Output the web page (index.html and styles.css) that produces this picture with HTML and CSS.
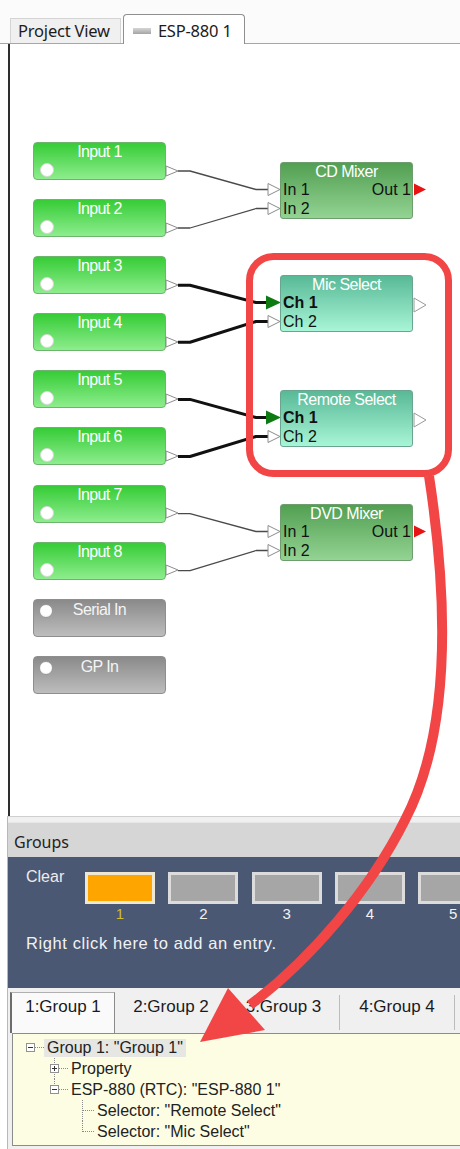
FILE: index.html
```
<!DOCTYPE html>
<html lang="en">
<head>
    <meta charset="UTF-8">
    <meta name="viewport" content="width=device-width, initial-scale=1.0">
    <title>ESP-880 1</title>
    <link rel="stylesheet" href="styles.css">
</head>
<body>

<div class="app">

    <div class="doc-tabs">
        <div class="doc-tab">Project View</div>
        <div class="doc-tab active"><span class="doc-icon"></span>ESP-880 1</div>
    </div>

    <div class="canvas">
        <!-- wires + ports, drawn in page coordinates -->
        <svg class="wires" width="450" height="772" viewBox="10 44 450 772">
            <g fill="none" stroke="#4a4a4a" stroke-width="1.3" stroke-linejoin="round">
                <path d="M178 171 L190 171 L256 189.5 L268 189.5"/>
                <path d="M178 228 L190 228 L256 208.5 L268 208.5"/>
                <path d="M178 513.6 L190 513.6 L256 531.5 L268 531.5"/>
                <path d="M178 570.7 L190 570.7 L256 550.5 L268 550.5"/>
            </g>
            <g fill="none" stroke="#111" stroke-width="3" stroke-linejoin="round">
                <path d="M178 285.2 L190 285.2 L256 302.5 L268 302.5"/>
                <path d="M178 342.3 L190 342.3 L256 321.5 L268 321.5"/>
                <path d="M178 399.4 L190 399.4 L256 417.5 L268 417.5"/>
                <path d="M178 456.5 L190 456.5 L256 436.5 L268 436.5"/>
            </g>

            <!-- input outputs -->
            <g fill="#fff" stroke="#8c8c8c" stroke-width="1">
                <polygon points="166,166 178,171 166,176"/>
                <polygon points="166,223 178,228 166,233"/>
                <polygon points="166,280 178,285 166,290"/>
                <polygon points="166,337 178,342 166,347"/>
                <polygon points="166,394 178,399 166,404"/>
                <polygon points="166,451 178,456 166,461"/>
                <polygon points="166,508 178,513 166,518"/>
                <polygon points="166,565 178,570 166,575"/>
            </g>

            <!-- block inputs -->
            <g fill="#fff" stroke="#8c8c8c" stroke-width="1">
                <polygon points="268,183.5 280,189.5 268,195.5"/>
                <polygon points="268,202.5 280,208.5 268,214.5"/>
                <polygon points="268,315.5 280,321.5 268,327.5"/>
                <polygon points="268,430.5 280,436.5 268,442.5"/>
                <polygon points="268,525.5 280,531.5 268,537.5"/>
                <polygon points="268,544.5 280,550.5 268,556.5"/>
            </g>
            <g fill="#0e7a12">
                <polygon points="266,295.5 281,302.5 266,309.5"/>
                <polygon points="266,410.5 281,417.5 266,424.5"/>
            </g>

            <!-- block outputs -->
            <g fill="#e81414">
                <polygon points="414,183.5 426,189.5 414,195.5"/>
                <polygon points="414,525.5 426,531.5 414,537.5"/>
            </g>
            <g fill="#fff" stroke="#9a9a9a" stroke-width="1">
                <polygon points="414,298 426,305 414,312"/>
                <polygon points="414,413 426,420 414,427"/>
            </g>
        </svg>

        <div class="inputs">
            <div class="src"><span class="src-name">Input 1</span><span class="led"></span></div>
            <div class="src"><span class="src-name">Input 2</span><span class="led"></span></div>
            <div class="src"><span class="src-name">Input 3</span><span class="led"></span></div>
            <div class="src"><span class="src-name">Input 4</span><span class="led"></span></div>
            <div class="src"><span class="src-name">Input 5</span><span class="led"></span></div>
            <div class="src"><span class="src-name">Input 6</span><span class="led"></span></div>
            <div class="src"><span class="src-name">Input 7</span><span class="led"></span></div>
            <div class="src"><span class="src-name">Input 8</span><span class="led"></span></div>
            <div class="src off"><span class="src-name">Serial In</span><span class="led"></span></div>
            <div class="src off"><span class="src-name">GP In</span><span class="led"></span></div>
        </div>

        <div class="block mixer cd">
            <div class="block-title">CD Mixer</div>
            <div class="port-row"><span>In 1</span><span>Out 1</span></div>
            <div class="port-row"><span>In 2</span></div>
        </div>

        <div class="block selector mic">
            <div class="block-title">Mic Select</div>
            <div class="port-row"><b>Ch 1</b></div>
            <div class="port-row"><span>Ch 2</span></div>
        </div>

        <div class="block selector remote">
            <div class="block-title">Remote Select</div>
            <div class="port-row"><b>Ch 1</b></div>
            <div class="port-row"><span>Ch 2</span></div>
        </div>

        <div class="block mixer dvd">
            <div class="block-title">DVD Mixer</div>
            <div class="port-row"><span>In 1</span><span>Out 1</span></div>
            <div class="port-row"><span>In 2</span></div>
        </div>
    </div>

    <div class="groups">
        <div class="groups-head">Groups</div>

        <div class="board">
            <div class="slots">
                <span class="clear">Clear</span>
                <div class="slot on"><span class="slot-box"></span><span class="slot-no">1</span></div>
                <div class="slot"><span class="slot-box"></span><span class="slot-no">2</span></div>
                <div class="slot"><span class="slot-box"></span><span class="slot-no">3</span></div>
                <div class="slot"><span class="slot-box"></span><span class="slot-no">4</span></div>
                <div class="slot"><span class="slot-box"></span><span class="slot-no">5</span></div>
            </div>
            <p class="hint">Right click here to add an entry.</p>
        </div>

        <div class="group-tabs">
            <span class="gtab active">1:Group 1</span>
            <span class="gtab w2">2:Group 2</span>
            <span class="gtab w3">3:Group 3</span>
            <span class="gtab w4">4:Group 4</span>
        </div>

        <div class="tree">
            <div class="row root">
                <span class="tog"></span><span class="twig"></span><span class="label sel">Group 1: "Group 1"</span>
            </div>
            <div class="row lv1 rail-mid">
                <span class="tog plus"></span><span class="twig"></span><span class="label">Property</span>
            </div>
            <div class="row lv1 rail-end">
                <span class="tog"></span><span class="twig"></span><span class="label">ESP-880 (RTC): "ESP-880 1"</span>
            </div>
            <div class="row lv2 rail-mid">
                <span class="twig long"></span><span class="label">Selector: "Remote Select"</span>
            </div>
            <div class="row lv2 rail-end">
                <span class="twig long"></span><span class="label">Selector: "Mic Select"</span>
            </div>
        </div>
    </div>

    <!-- red annotation drawn over the screenshot -->
    <svg class="callout" width="460" height="1149" viewBox="0 0 460 1149">
        <rect x="249.5" y="256.5" width="199" height="217" rx="24" fill="none" stroke="#f24646" stroke-width="7"/>
        <path d="M429 476 C448 600 452 730 405 820 C370 890 310 960 250 1005" fill="none" stroke="#f24646" stroke-width="10"/>
        <polygon points="200,1042 228,988 265,1030" fill="#f24646"/>
    </svg>

</div>

</body>
</html>
```

FILE: styles.css
```
body {
    margin: 0;
    font-family: "Liberation Sans", Arial, sans-serif;
    background: #fff;
}

.app {
    position: relative;
    width: 460px;
    height: 1149px;
    overflow: hidden;
}

/* document tabs */
.doc-tabs {
    height: 43px;
    border-bottom: 1px solid #a6a6a6;
    display: flex;
    align-items: flex-end;
    padding-left: 10px;
    background: #fbfbfb;
}

.doc-tab {
    height: 24px;
    line-height: 24px;
    padding: 0 10px 0 7px;
    background: #f0f0f0;
    border: 1px solid #d4d4d4;
    border-bottom: none;
    font-family: "Noto Sans", sans-serif;
    font-size: 16.5px;
    letter-spacing: -0.2px;
    color: #1c1c1c;
}

.doc-tab.active {
    margin: 0 0 -1px 2px;
    padding: 3px 12px 0 9px;
    box-sizing: border-box;
    height: 30px;
    display: flex;
    align-items: center;
    background: #fff;
    border-color: #8f8f8f;
    border-radius: 4px 4px 0 0;
}

.doc-icon {
    width: 18px;
    height: 6px;
    margin-right: 7px;
    background: linear-gradient(#d6d6d6, #a4a4a4);
}

/* design canvas */
.canvas {
    position: relative;
    margin-left: 8px;
    height: 772px;
    border-left: 2px solid #2e2e2e;
    background: #fff;
}

.wires {
    position: absolute;
    left: 0;
    top: 0;
}

.inputs {
    display: flex;
    flex-direction: column;
    gap: 19.1px;
    padding: 98px 0 0 23px;
}

.src {
    display: grid;
    width: 133px;
    height: 38px;
    box-sizing: border-box;
    border: 1px solid #6db46d;
    border-radius: 4px;
    background: linear-gradient(#36cc36, #8ded8d);
}

.src > * {
    grid-area: 1 / 1;
}

.src-name {
    justify-self: center;
    align-self: start;
    line-height: 18px;
    font-size: 16px;
    letter-spacing: -0.6px;
    color: #fff;
}

.led {
    justify-self: start;
    align-self: end;
    width: 14px;
    height: 14px;
    margin: 0 0 2px 6px;
    box-sizing: border-box;
    border-radius: 50%;
    border: 1px solid #d8d8d8;
    background: #fff;
}

.src.off {
    border-color: #8e8e8e;
    background: linear-gradient(#8a8a8a, #bdbdbd);
}

.src.off .led {
    align-self: start;
    margin: 4px 0 0 5px;
    border-color: #9a9a9a;
    background: radial-gradient(circle at 50% 40%, #fff 55%, #e4e4e4);
}

.src.off .src-name {
    line-height: 20px;
    color: #f4f4f4;
}

/* processing blocks */
.block {
    position: absolute;
    left: 270px;
    width: 133px;
    height: 57px;
    box-sizing: border-box;
    border: 1px solid #6e9e6e;
    border-radius: 3px;
}

.block-title {
    line-height: 17px;
    text-align: center;
    font-size: 16px;
    letter-spacing: -0.5px;
    color: #fff;
}

.port-row {
    display: flex;
    justify-content: space-between;
    padding: 0 1px 0 2px;
    line-height: 19px;
    font-size: 16px;
    color: #111;
}

.mixer {
    background: linear-gradient(#529f52, #93d393);
}

.selector {
    border-color: #6aa590;
    background: linear-gradient(#58b996, #a8f5d7);
}

.cd { top: 118px; }
.mic { top: 231px; }
.remote { top: 346px; }
.dvd { top: 460px; }

/* groups panel */
.groups {
    margin-left: 7px;
    border-left: 1px solid #b8b8b8;
    border-top: 1px solid #cfcfcf;
    padding-top: 5px;
    height: 332px;
    background: #f0f0f0;
}

.groups-head {
    height: 35px;
    box-sizing: border-box;
    padding: 3px 0 0 6px;
    display: flex;
    align-items: center;
    background: #d6d6d6;
    border-top: 1px solid #e6e6e6;
    font-family: "Noto Sans", sans-serif;
    font-size: 16px;
    color: #222;
}

.board {
    height: 131px;
    box-sizing: border-box;
    padding: 11px 0 0 18px;
    background: #4a5874;
    overflow: hidden;
}

.slots {
    display: flex;
    align-items: flex-start;
    white-space: nowrap;
}

.clear {
    flex: 0 0 59px;
    line-height: 18px;
    font-size: 16px;
    color: #ececec;
}

.slot {
    flex: 0 0 70px;
    margin: 4px 13.3px 0 0;
    display: flex;
    flex-direction: column;
    align-items: center;
}

.slot-box {
    width: 70px;
    height: 32px;
    box-sizing: border-box;
    border: 3px solid #dcdcdc;
    background: #a6a6a6;
}

.slot.on .slot-box {
    border-color: #efe7d6;
    background: #ffa500;
}

.slot-no {
    line-height: 20px;
    font-size: 15px;
    color: #f2f2f2;
}

.slot.on .slot-no {
    color: #d2bd2a;
}

.hint {
    margin: 9px 0 0;
    line-height: 20px;
    font-size: 16.5px;
    letter-spacing: 0.6px;
    color: #f2f2f2;
}

/* group tabs */
.group-tabs {
    height: 45px;
    display: flex;
    padding-left: 2px;
    background: #f0f0f0;
}

.gtab {
    flex: 0 0 auto;
    width: 112px;
    height: 35px;
    margin-top: 7px;
    box-sizing: border-box;
    padding-top: 1px;
    border-right: 1px solid #bcbcbc;
    text-align: center;
    line-height: 22px;
    font-size: 17px;
    color: #1a1a1a;
}

.gtab.active {
    width: 105px;
    height: 41px;
    margin-top: 4px;
    padding-top: 3px;
    background: #fafafa;
    border-top: 1px solid #b0b0b0;
    border-left: 2px solid #6c6c6c;
    border-right: 1px solid #8a8a8a;
}

.gtab.w2 { width: 113px; }
.gtab.w4 { width: 115px; }

/* tree */
.tree {
    margin: 0 -10px 0 4px;
    height: 113px;
    box-sizing: border-box;
    padding-top: 3px;
    border: 1px solid #8c8c8c;
    background: #fdfde4;
}

.row {
    position: relative;
    display: flex;
    align-items: center;
    height: 21px;
    font-size: 16px;
    color: #222;
}

.root { padding-left: 13px; }
.lv1 { padding-left: 37px; }
.lv2 { padding-left: 69px; }

.tog {
    position: relative;
    width: 9px;
    height: 9px;
    box-sizing: border-box;
    border: 1px solid #929292;
    background: #fff;
    z-index: 1;
}

.tog::before {
    content: "";
    position: absolute;
    left: 1px;
    top: 3px;
    width: 5px;
    height: 1px;
    background: #333;
}

.tog.plus::after {
    content: "";
    position: absolute;
    left: 3px;
    top: 1px;
    width: 1px;
    height: 5px;
    background: #333;
}

.twig {
    width: 9px;
    border-top: 1px dotted #8a8a8a;
}

.twig.long {
    width: 12px;
}

.label {
    padding: 0 3px;
    line-height: 18px;
}

.label.sel {
    background: #e6e6e2;
}

.rail-mid::before,
.rail-end::before {
    content: "";
    position: absolute;
    top: 0;
    border-left: 1px dotted #8a8a8a;
}

.rail-mid::before { height: 21px; }
.rail-end::before { height: 11px; }

.lv1::before { left: 41px; }
.lv2::before { left: 69px; }

/* annotation */
.callout {
    position: absolute;
    left: 0;
    top: 0;
    pointer-events: none;
}
```
